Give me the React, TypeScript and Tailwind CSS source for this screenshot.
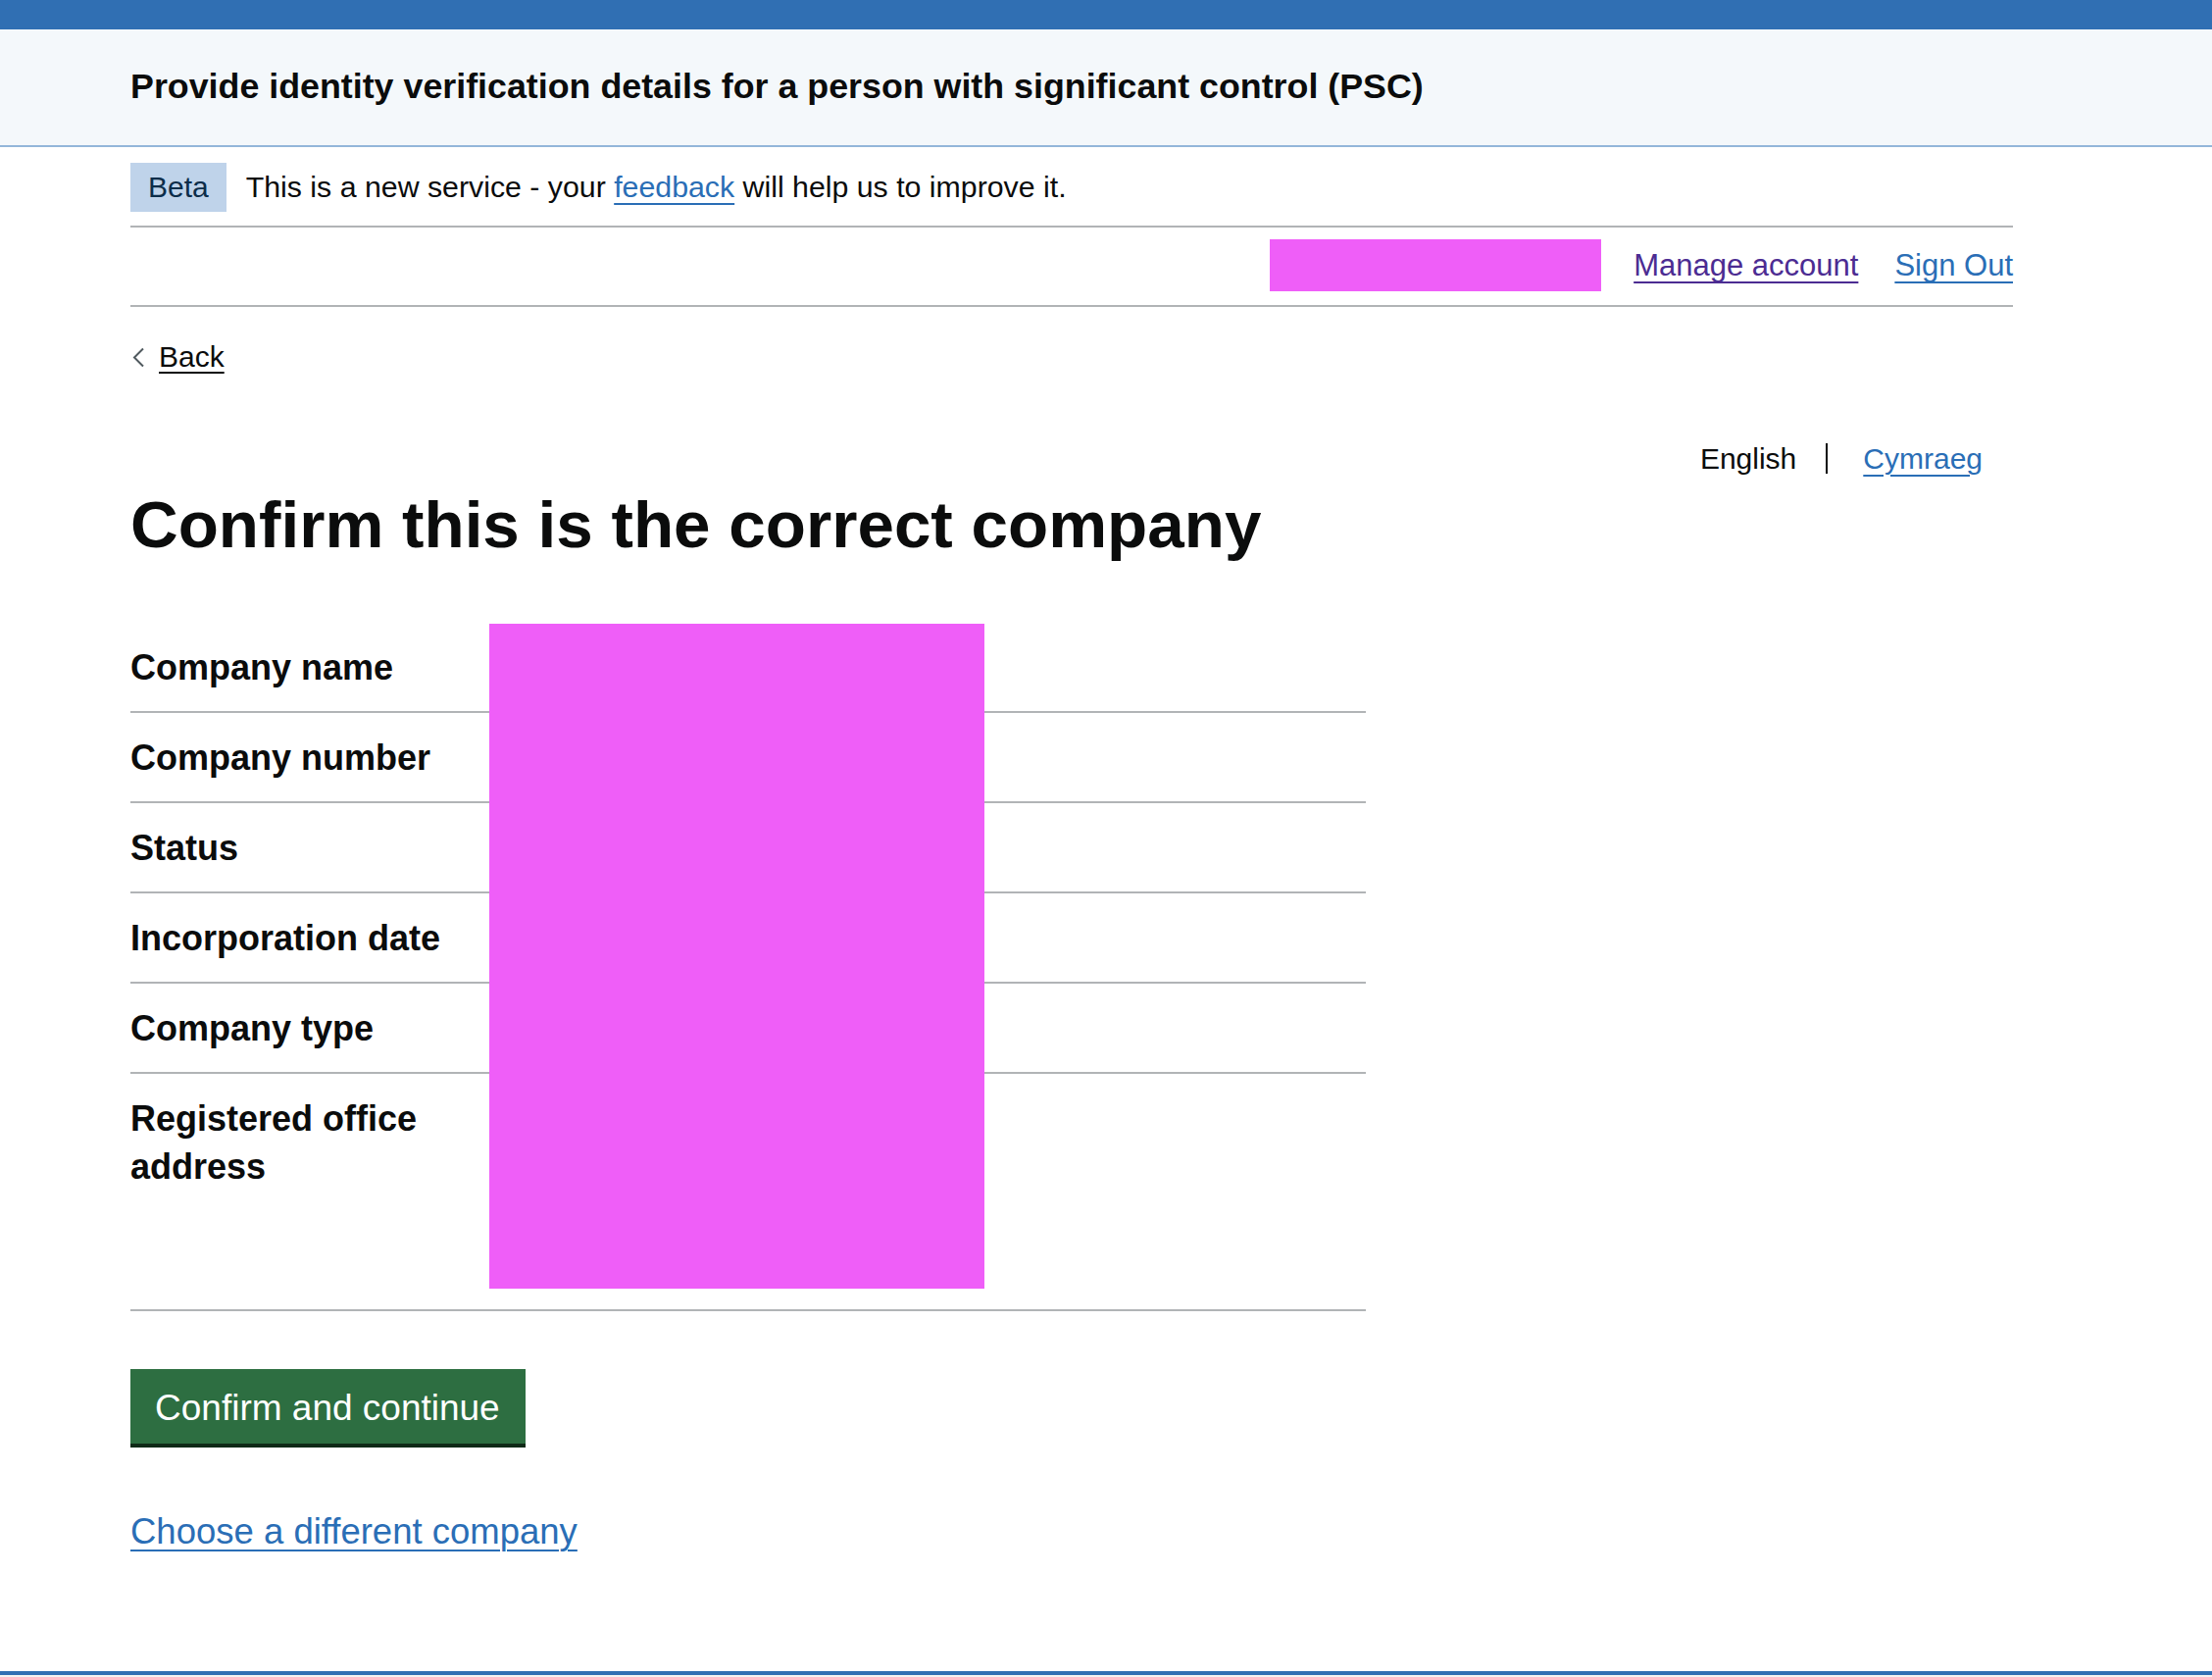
import React from 'react';

const rows = [
  { label: 'Company name' },
  { label: 'Company number' },
  { label: 'Status' },
  { label: 'Incorporation date' },
  { label: 'Company type' },
  { label: ['Registered office', 'address'], tall: true },
];

function BackChevron() {
  return (
    <svg width="13" height="21" viewBox="0 0 13 21" className="shrink-0">
      <polyline points="11,1.5 2,10.5 11,19.5" fill="none" stroke="#505a5f" strokeWidth="2" />
    </svg>
  );
}

export default function App() {
  return (
    <div className="min-h-[1710px] bg-white text-[#0b0c0c] font-['Liberation_Sans',Arial,sans-serif]">
      {/* Top blue strip */}
      <div className="h-[30px] bg-[#306fb3]" />

      {/* Service header */}
      <header className="flex h-[120px] items-center border-b-2 border-[#93b6da] bg-[#f4f8fb] px-[133px]">
        <div className="text-[35.8px] font-bold leading-none">
          Provide identity verification details for a person with significant control (PSC)
        </div>
      </header>

      <main className="ml-[133px] w-[1920px]">
        {/* Phase banner */}
        <div className="flex items-center gap-[20px] border-b-2 border-[#b1b4b6] pt-[16px] pb-[14px]">
          <span className="flex h-[50px] items-center bg-[#bfd3ea] px-[18px] text-[30px] leading-none text-[#0c2d4a]">
            Beta
          </span>
          <span className="text-[30.3px] leading-none">
            This is a new service - your{' '}
            <a href="#" className="text-[#2a6eb6] underline decoration-2 underline-offset-[6px]">
              feedback
            </a>{' '}
            will help us to improve it.
          </span>
        </div>

        {/* Account navigation */}
        <div className="flex items-center justify-end border-b-2 border-[#b1b4b6] pt-[12px] pb-[14px] text-[31px] leading-none">
          <div className="h-[53px] w-[338px] bg-[#ef5ef8]" />
          <a href="#" className="ml-[33px] text-[#4c2c92] underline decoration-2 underline-offset-[6px]">
            Manage account
          </a>
          <a href="#" className="ml-[37px] text-[#2a6eb6] underline decoration-2 underline-offset-[6px]">
            Sign Out
          </a>
        </div>

        {/* Back link */}
        <a href="#" className="mt-[36px] flex h-[30px] w-fit items-center gap-[14px] pl-[2px] text-[30px] leading-[30px]">
          <BackChevron />
          <span className="underline decoration-2 underline-offset-[5px]">Back</span>
        </a>

        {/* Language switcher */}
        <div className="mt-[73px] flex h-[31px] items-center justify-end pr-[31px] text-[30px] leading-[30px]">
          <span>English</span>
          <span className="mx-[30px] h-[31px] w-[2px] bg-[#0b0c0c]" />
          <a href="#" className="ml-[6px] text-[#2a6eb6] underline decoration-2 underline-offset-[6px]">
            Cymraeg
          </a>
        </div>

        <h1 className="mt-[18px] text-[67.4px] font-bold leading-[67px]">Confirm this is the correct company</h1>

        {/* Company summary list */}
        <div className="relative mt-[67px] w-[1260px]">
          {rows.map((row, i) => (
            <div
              key={i}
              className={`flex border-b-2 border-[#b1b4b6] pt-[21px] pb-[20px] ${row.tall ? 'min-h-[242px]' : ''}`}
            >
              <div className="w-[366px] text-[36px] font-bold leading-[49px]">
                {Array.isArray(row.label) ? row.label.map((l) => <div key={l}>{l}</div>) : row.label}
              </div>
            </div>
          ))}
          <div className="absolute left-[366px] top-[1px] h-[678px] w-[505px] bg-[#ef5ef8]" />
        </div>

        <button className="mt-[59px] bg-[#2d6e41] pt-[22px] pb-[19px] pl-[25px] pr-[26px] text-[37px] leading-[35px] text-white shadow-[0_4px_0_#0f2a17]">
          Confirm and continue
        </button>

        <div className="mt-[72px]">
          <a href="#" className="text-[36.5px] leading-[36px] text-[#2a6eb6] underline decoration-2 underline-offset-[6px]">
            Choose a different company
          </a>
        </div>
      </main>

      <footer className="mt-[123px] h-[200px] border-t-4 border-[#306fb3] bg-[#f3f2f1]" />
    </div>
  );
}
